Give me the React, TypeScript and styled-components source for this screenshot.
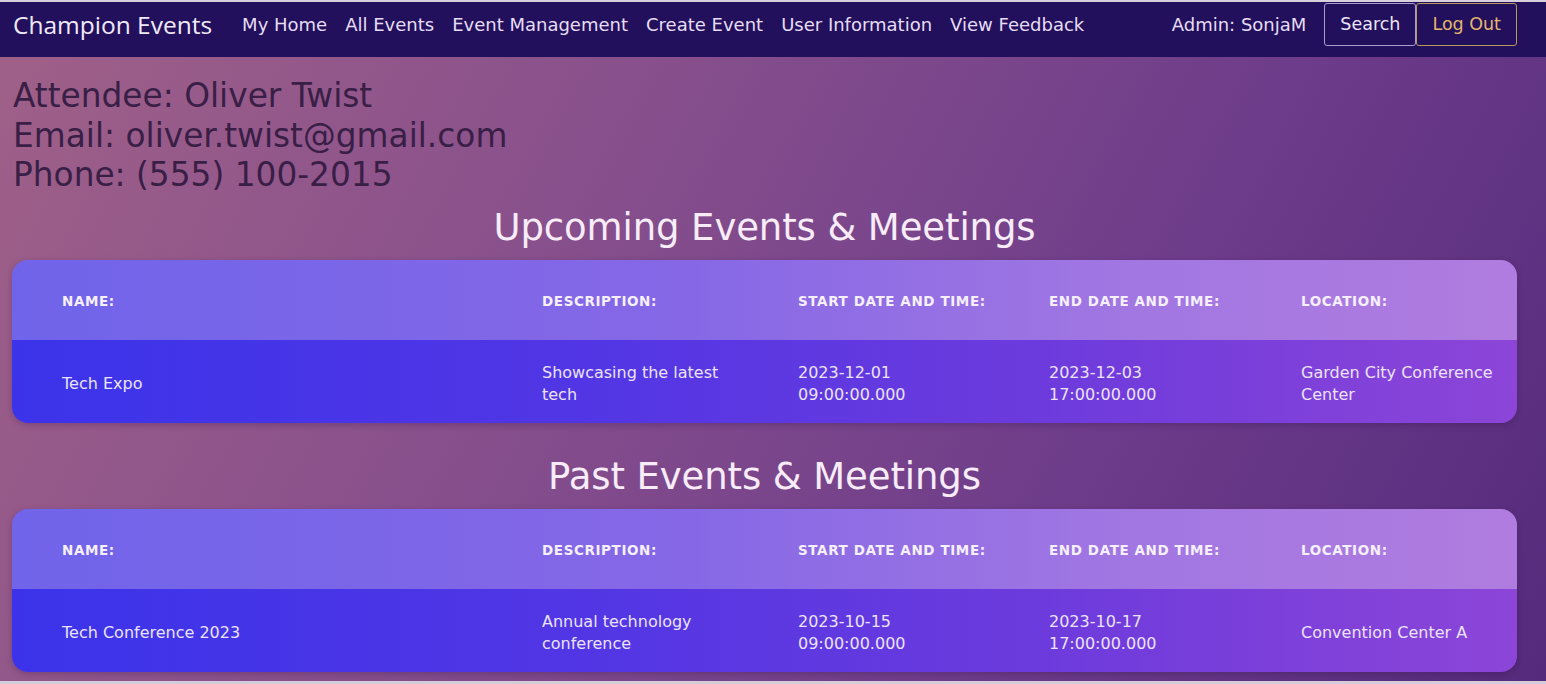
import React from "react";
import styled, { createGlobalStyle } from "styled-components";

const GlobalStyle = createGlobalStyle`
  * {
    box-sizing: border-box;
  }
  html, body {
    margin: 0;
    padding: 0;
    height: 100%;
  }
  body {
    font-family: "DejaVu Sans", Verdana, sans-serif;
    background: #d4ccd8;
  }
  #root {
    min-height: 100%;
  }
`;

const Page = styled.div`
  min-height: 100vh;
  border-top: 2px solid #d8d0dc;
  border-bottom: 3px solid #d4ccd8;
  background: linear-gradient(118deg, #a06188 0%, #88508c 35%, #6d3c8a 70%, #552a7c 100%);
  display: flex;
  flex-direction: column;
`;

const Navbar = styled.nav`
  display: flex;
  align-items: center;
  height: 55px;
  padding: 0 29px 11px 13px;
  background: #22105c;
`;

const Brand = styled.span`
  font-family: "Open Sans", sans-serif;
  font-size: 24.5px;
  font-weight: 500;
  color: #f0eaf8;
  margin-right: 30px;
  white-space: nowrap;
`;

const NavLinks = styled.div`
  display: flex;
  gap: 18px;
`;

const NavLink = styled.a`
  font-size: 18px;
  color: #e6ddf4;
  white-space: nowrap;
  text-decoration: none;
  cursor: pointer;
`;

const RightGroup = styled.div`
  margin-left: auto;
  display: flex;
  align-items: center;
`;

const AdminLabel = styled.span`
  font-size: 18px;
  color: #e6ddf4;
  margin-right: 18px;
  white-space: nowrap;
`;

const NavButton = styled.button<{ $tone: "light" | "gold" }>`
  height: 43px;
  padding: 0 15px;
  background: transparent;
  font-family: "DejaVu Sans", Verdana, sans-serif;
  font-size: 17.5px;
  border-radius: 3px;
  cursor: pointer;
  color: ${(p) => (p.$tone === "gold" ? "#e4b66c" : "#ece4f6")};
  border: 1px solid ${(p) => (p.$tone === "gold" ? "#b8985c" : "#a89ccc")};
`;

const Main = styled.main`
  padding: 20px 29px 0 12px;
`;

const Info = styled.div`
  font-size: 32.8px;
  line-height: 39.5px;
  color: #391e46;
  padding-left: 1px;
`;

const Sections = styled.div`
  display: flex;
  flex-direction: column;
  gap: 32px;
  margin-top: 10px;
`;

const Section = styled.section`
  display: flex;
  flex-direction: column;
  gap: 10px;
`;

const SectionTitle = styled.h2`
  margin: 0;
  text-align: center;
  font-size: 37px;
  line-height: 44px;
  font-weight: 400;
  letter-spacing: -0.1px;
  color: #f7ecf7;
`;

const Card = styled.div`
  border-radius: 16px;
  overflow: hidden;
  box-shadow: 0 2px 6px rgba(40, 10, 60, 0.25);
`;

const Row = styled.div<{ $head?: boolean }>`
  display: grid;
  grid-template-columns: 480px 256px 251px 252px 1fr;
  align-items: center;
  padding-left: 50px;
  padding-top: ${(p) => (p.$head ? "2px" : "5px")};
  height: ${(p) => (p.$head ? "80px" : "83px")};
  background: ${(p) =>
    p.$head
      ? "linear-gradient(90deg, #7064ea 0%, #8668e6 45%, #a277e2 75%, #b07cdf 100%)"
      : "linear-gradient(90deg, #3b33ea 0%, #5336e4 40%, #6e3bdc 70%, #8c45d8 100%)"};
`;

const HeadCell = styled.div`
  font-size: 13.5px;
  font-weight: 700;
  letter-spacing: 0.6px;
  color: #f6f0fc;
  text-transform: uppercase;
  padding-right: 12px;
`;

const Cell = styled.div<{ $wide?: boolean }>`
  font-size: 16px;
  line-height: 22px;
  color: #ebe3fa;
  padding-right: ${(p) => (p.$wide ? "12px" : "56px")};
`;

type EventItem = {
  name: string;
  description: string;
  start: [string, string];
  end: [string, string];
  location: string;
};

const upcoming: EventItem[] = [
  {
    name: "Tech Expo",
    description: "Showcasing the latest tech",
    start: ["2023-12-01", "09:00:00.000"],
    end: ["2023-12-03", "17:00:00.000"],
    location: "Garden City Conference Center",
  },
];

const past: EventItem[] = [
  {
    name: "Tech Conference 2023",
    description: "Annual technology conference",
    start: ["2023-10-15", "09:00:00.000"],
    end: ["2023-10-17", "17:00:00.000"],
    location: "Convention Center A",
  },
];

const headers = [
  "Name:",
  "Description:",
  "Start Date and Time:",
  "End Date and Time:",
  "Location:",
];

function EventTable({ items }: { items: EventItem[] }) {
  return (
    <Card>
      <Row $head>
        {headers.map((h) => (
          <HeadCell key={h}>{h}</HeadCell>
        ))}
      </Row>
      {items.map((ev) => (
        <Row key={ev.name}>
          <Cell>{ev.name}</Cell>
          <Cell>{ev.description}</Cell>
          <Cell>
            {ev.start[0]} {ev.start[1]}
          </Cell>
          <Cell>
            {ev.end[0]} {ev.end[1]}
          </Cell>
          <Cell $wide>{ev.location}</Cell>
        </Row>
      ))}
    </Card>
  );
}

const links = [
  "My Home",
  "All Events",
  "Event Management",
  "Create Event",
  "User Information",
  "View Feedback",
];

export default function App() {
  return (
    <>
      <GlobalStyle />
      <Page>
        <Navbar>
          <Brand>Champion Events</Brand>
          <NavLinks>
            {links.map((l) => (
              <NavLink key={l}>{l}</NavLink>
            ))}
          </NavLinks>
          <RightGroup>
            <AdminLabel>Admin: SonjaM</AdminLabel>
            <NavButton $tone="light">Search</NavButton>
            <NavButton $tone="gold">Log Out</NavButton>
          </RightGroup>
        </Navbar>
        <Main>
          <Info>
            <div>Attendee: Oliver Twist</div>
            <div>Email: oliver.twist@gmail.com</div>
            <div>Phone: (555) 100-2015</div>
          </Info>
          <Sections>
            <Section>
              <SectionTitle>Upcoming Events &amp; Meetings</SectionTitle>
              <EventTable items={upcoming} />
            </Section>
            <Section>
              <SectionTitle>Past Events &amp; Meetings</SectionTitle>
              <EventTable items={past} />
            </Section>
          </Sections>
        </Main>
      </Page>
    </>
  );
}
